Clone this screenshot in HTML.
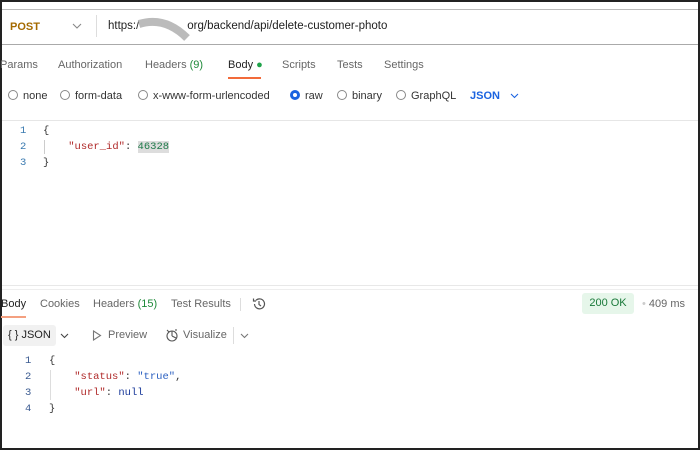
<!DOCTYPE html><html><head><style>
*{margin:0;padding:0;box-sizing:border-box}
body{width:700px;height:450px;background:#fff;position:relative;overflow:hidden;font-family:"Liberation Sans",sans-serif;font-size:11px;color:#444}
.a{position:absolute;white-space:nowrap}
.hl{position:absolute;left:0;right:0;height:1px}
.mono{font-family:"Liberation Mono",monospace;font-size:10.5px}
.r{display:inline-block;width:10px;height:10px;border:1px solid #888;border-radius:50%;vertical-align:-1px;margin-right:5px}
</style></head><body>
<div style="position:absolute;left:0;top:0;width:700px;height:450px;border:2px solid #222"></div>
<div class="hl" style="top:9px;background:#bbb;left:2px;right:2px"></div>
<div class="hl" style="top:44px;background:#aaa;left:2px;right:2px"></div>
<div class="a" style="left:10px;top:21px;color:#a46a00;font-weight:bold;font-size:11px">POST</div>
<svg class="a" style="left:72px;top:23px" width="10" height="6" fill="none" stroke="#888" stroke-width="1.1"><path d="M1 1 L5 5 L9 1"/></svg>
<div class="a" style="left:96px;top:15px;width:1px;height:22px;background:#ddd"></div>
<div class="a" style="left:108px;top:20px;color:#222;font-size:11.5px">https:/&nbsp;&nbsp;&nbsp;&nbsp;&nbsp;&nbsp;&nbsp;&nbsp;&nbsp;&nbsp;&nbsp;&nbsp;&nbsp;&nbsp;&nbsp;org/backend/api/delete-customer-photo</div>
<svg class="a" style="left:135px;top:14px" width="62" height="30"><path d="M4 10 Q30 2 52 24" stroke="#bbb" stroke-width="8" fill="none"/></svg>
<div class="a" style="left:0;top:59px;color:#666">Params</div>
<div class="a" style="left:58px;top:59px;color:#666">Authorization</div>
<div class="a" style="left:145px;top:59px;color:#666">Headers <span style="color:#1f8a3a">(9)</span></div>
<div class="a" style="left:228px;top:59px;color:#222">Body <span style="color:#1fa34a">●</span></div>
<div class="a" style="left:228px;top:77px;width:33px;height:2px;background:#f26b3a"></div>
<div class="a" style="left:282px;top:59px;color:#666">Scripts</div>
<div class="a" style="left:337px;top:59px;color:#666">Tests</div>
<div class="a" style="left:384px;top:59px;color:#666">Settings</div>
<div class="a" style="left:8px;top:90px;color:#333"><span class="r"></span>none</div>
<div class="a" style="left:60px;top:90px;color:#333"><span class="r"></span>form-data</div>
<div class="a" style="left:138px;top:90px;color:#333"><span class="r"></span>x-www-form-urlencoded</div>
<div class="a" style="left:290px;top:90px;color:#333"><span class="r" style="border:3px solid #1a63e0"></span>raw</div>
<div class="a" style="left:337px;top:90px;color:#333"><span class="r"></span>binary</div>
<div class="a" style="left:396px;top:90px;color:#333"><span class="r"></span>GraphQL</div>
<div class="a" style="left:470px;top:90px;color:#1a63e0;font-weight:bold">JSON</div>
<svg class="a" style="left:510px;top:93px" width="9" height="6" fill="none" stroke="#1a63e0" stroke-width="1.1"><path d="M1 1 L4.5 4.5 L8 1"/></svg>
<div class="hl" style="top:120px;background:#e6e6e6;left:2px;right:2px"></div>
<div class="a mono" style="left:20px;top:123px;line-height:16px;color:#3a7ab0">1<br>2<br>3</div>
<div class="a" style="left:44px;top:140px;width:1px;height:14px;background:#ccc"></div>
<div class="a mono" style="left:43px;top:123px;line-height:16px;color:#333">{<br>&nbsp;&nbsp;&nbsp;&nbsp;<span style="color:#b02a2a">"user_id"</span>: <span style="color:#1f7a4a;background:#ddd">46328</span><br>}</div>
<div class="hl" style="top:285px;background:#e8e8e8;left:2px;right:2px"></div>
<div class="hl" style="top:289px;background:#eee;left:2px;right:2px"></div>
<div class="a" style="left:1px;top:298px;color:#222">Body</div>
<div class="a" style="left:1px;top:316px;width:25px;height:2px;background:#f4a080"></div>
<div class="a" style="left:40px;top:298px;color:#666">Cookies</div>
<div class="a" style="left:93px;top:298px;color:#666">Headers <span style="color:#1f8a3a">(15)</span></div>
<div class="a" style="left:171px;top:298px;color:#666">Test Results</div>
<div class="a" style="left:240px;top:298px;width:1px;height:13px;background:#ddd"></div>
<svg class="a" style="left:252px;top:297px" width="14" height="14" fill="none" stroke="#555" stroke-width="1.2"><path d="M2.5 7 A5 5 0 1 0 4 3.3 M1.5 1.5 V4 H4 M7 4 V7.5 L9 9"/></svg>
<div class="a" style="left:582px;top:293px;width:52px;height:21px;background:#e6f6ea;border-radius:3px;color:#1a7a3a;text-align:center;line-height:21px">200 OK</div>
<div class="a" style="left:642px;top:298px;color:#666"><span style="color:#ccc">•</span> 409 ms</div>
<div class="a" style="left:3px;top:325px;width:53px;height:21px;background:#f1f1f1;border-radius:3px"></div>
<div class="a" style="left:8px;top:329px;color:#222">{ } JSON</div>
<svg class="a" style="left:60px;top:333px" width="9" height="6" fill="none" stroke="#444" stroke-width="1.1"><path d="M1 1 L4.5 4.5 L8 1"/></svg>
<svg class="a" style="left:92px;top:330px" width="10" height="11" fill="none" stroke="#777" stroke-width="1.1"><path d="M1.5 1 L8.5 5.5 L1.5 10 Z"/></svg>
<div class="a" style="left:108px;top:329px;color:#666">Preview</div>
<svg class="a" style="left:165px;top:328px" width="14" height="14" fill="none" stroke="#555" stroke-width="1.1"><circle cx="7" cy="8" r="5"/><path d="M7 8 L7 3 M7 8 L11 10 M2 2 L4 4 M11 1 L11 3"/></svg>
<div class="a" style="left:183px;top:329px;color:#666">Visualize</div>
<div class="a" style="left:233px;top:327px;width:1px;height:17px;background:#ddd"></div>
<svg class="a" style="left:240px;top:333px" width="9" height="6" fill="none" stroke="#777" stroke-width="1.1"><path d="M1 1 L4.5 4.5 L8 1"/></svg>
<div class="a mono" style="left:25px;top:353px;line-height:16px;color:#3a5a90">1<br>2<br>3<br>4</div>
<div class="a" style="left:50px;top:370px;width:1px;height:30px;background:#ddd"></div>
<div class="a mono" style="left:49px;top:353px;line-height:16px;color:#333">{<br>&nbsp;&nbsp;&nbsp;&nbsp;<span style="color:#b02a2a">"status"</span>: <span style="color:#2a5fc0">"true"</span>,<br>&nbsp;&nbsp;&nbsp;&nbsp;<span style="color:#b02a2a">"url"</span>: <span style="color:#1a3a9a">null</span><br>}</div>
</body></html>
